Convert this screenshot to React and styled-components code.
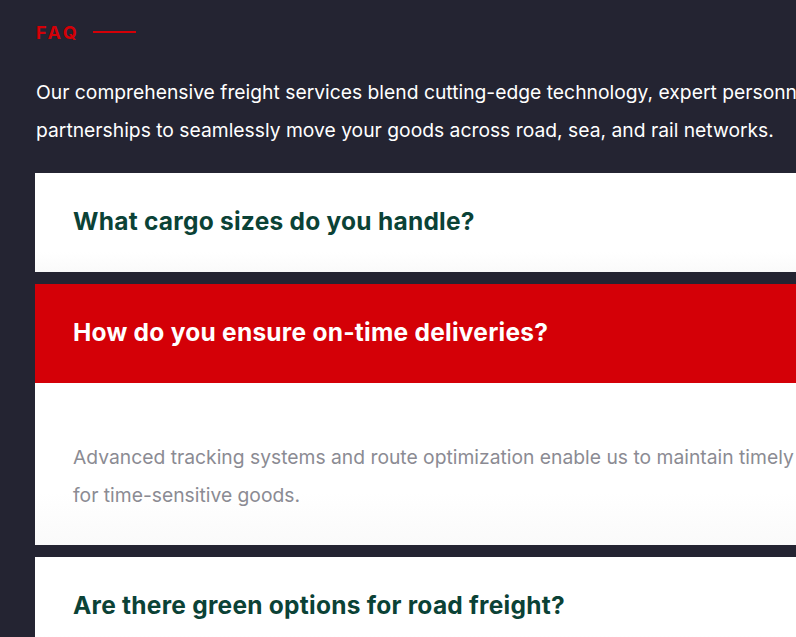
import React from 'react';
import styled, { createGlobalStyle } from 'styled-components';

const GlobalStyle = createGlobalStyle`
  html, body {
    margin: 0;
    padding: 0;
    background: #242432;
    overflow: hidden;
  }
  body {
    font-family: Inter, "Noto Sans", sans-serif;
  }
`;

const faqs = [
  { q: 'What cargo sizes do you handle?' },
  {
    q: 'How do you ensure on-time deliveries?',
    a: 'Advanced tracking systems and route optimization enable us to maintain timely deliveries, with dedicated handling for time-sensitive goods.',
    open: true,
  },
  { q: 'Are there green options for road freight?' },
];

const App = () => (
  <>
    <GlobalStyle />
    <Section>
      <Eyebrow>
        <EyebrowText>FAQ</EyebrowText>
        <EyebrowLine />
      </Eyebrow>
      <Intro>
        Our comprehensive freight services blend cutting-edge technology, expert personnel, and strategic
        partnerships to seamlessly move your goods across road, sea, and rail networks.
      </Intro>
      <List>
        {faqs.map((item, index) => (
          <Item key={index}>
            <Question $open={item.open}>{item.q}</Question>
            {item.open && <Answer>{item.a}</Answer>}
          </Item>
        ))}
      </List>
    </Section>
  </>
);

const Section = styled.section`
  width: 1300px;
  padding: 20px 0 0 35px;
  box-sizing: border-box;
`;

const Eyebrow = styled.div`
  display: flex;
  align-items: center;
  gap: 14px;
  height: 24px;
  padding-left: 1px;
`;

const EyebrowText = styled.span`
  color: #d40007;
  font-size: 18px;
  font-weight: 700;
  letter-spacing: 2.6px;
`;

const EyebrowLine = styled.span`
  display: block;
  width: 43px;
  height: 2px;
  background: #d40007;
`;

const Intro = styled.p`
  margin: 29px 0 0 1px;
  width: 1000px;
  color: #ffffff;
  font-size: 19.3px;
  line-height: 38px;
`;

const List = styled.div`
  display: flex;
  flex-direction: column;
  gap: 12px;
  margin-top: 24px;
`;

const Item = styled.div`
  background: linear-gradient(to bottom, #ffffff 80%, #fafafa 100%);
`;

const Question = styled.h3`
  margin: 0;
  height: 99px;
  box-sizing: border-box;
  display: flex;
  align-items: center;
  padding: 0 38px 3px;
  font-size: 24.5px;
  font-weight: 700;
  letter-spacing: 0.25px;
  color: ${(p) => (p.$open ? '#ffffff' : '#0b4236')};
  background: ${(p) => (p.$open ? '#d40007' : 'transparent')};
`;

const Answer = styled.p`
  margin: 0;
  padding: 55px 38px 31px;
  width: 1060px;
  color: #8b8b93;
  font-size: 19.3px;
  line-height: 38px;
`;

export default App;
